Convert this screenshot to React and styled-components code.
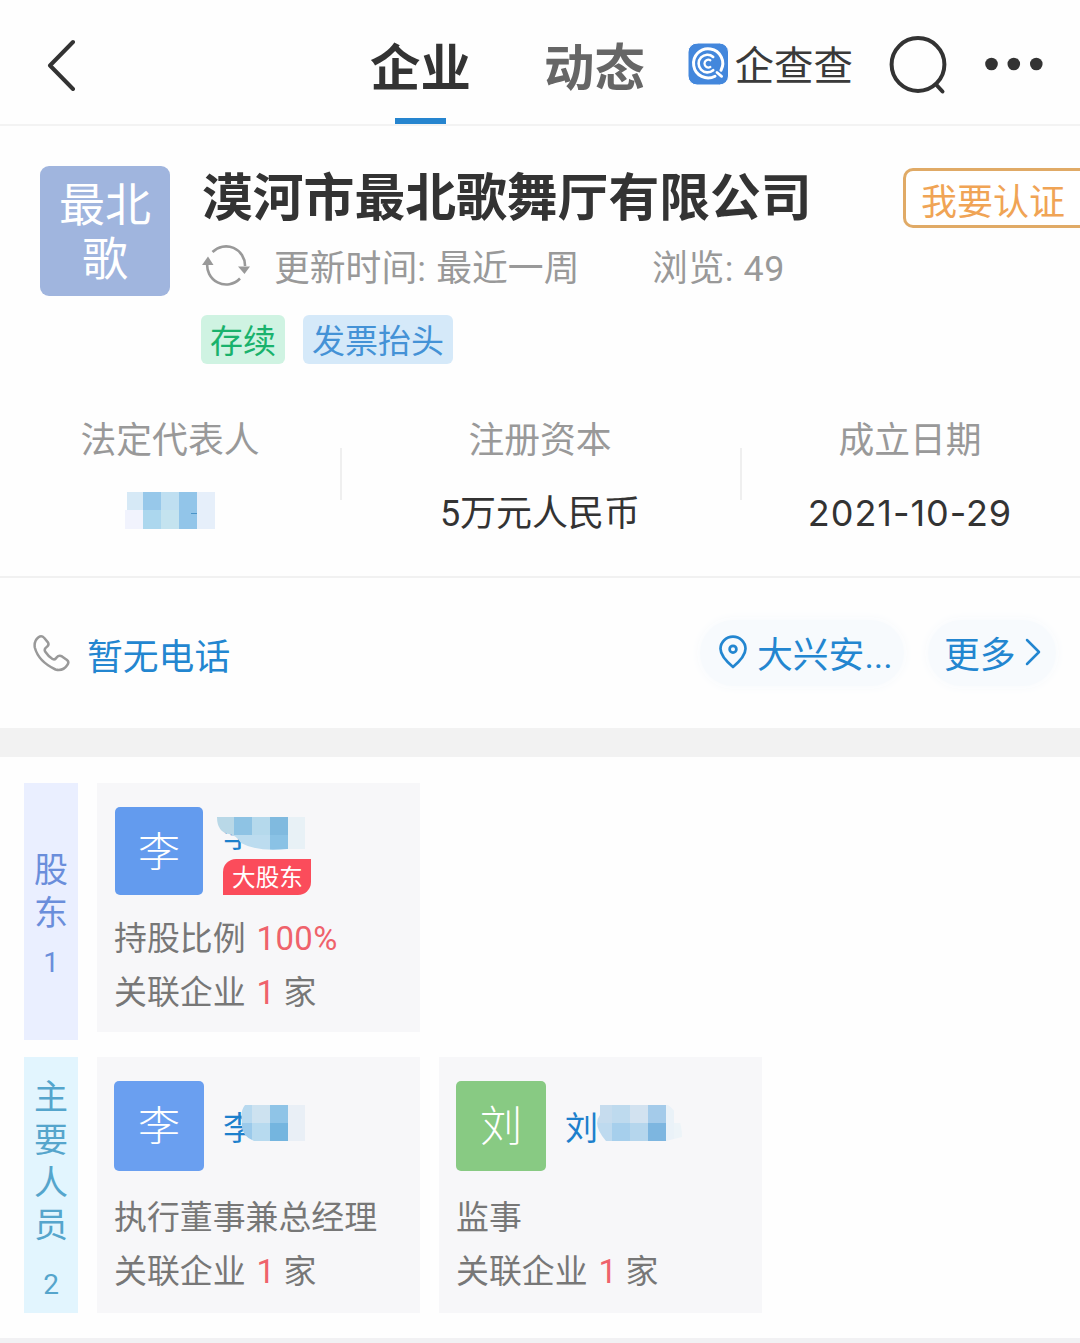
import styled, { createGlobalStyle } from 'styled-components';

const GlobalStyle = createGlobalStyle`
  * { box-sizing: border-box; margin: 0; padding: 0; }
  body {
    background: #fefefe;
    font-family: Roboto, 'Noto Sans CJK SC', sans-serif;
    overflow: hidden;
  }
  svg { display: block; flex-shrink: 0; }
`;

/* ================= Layout ================= */
const Page = styled.div`
  width: 1080px;
  height: 1343px;
  overflow: hidden;
  background: #fefefe;
`;

/* ================= Header ================= */
const Header = styled.header`
  display: flex;
  align-items: center;
  height: 126px;
  padding: 0 36px 0 46px;
  border-bottom: 2px solid #f3f3f3;
`;

const BackButton = styled.div`
  margin-top: 6px;
`;

const Tabs = styled.nav`
  display: flex;
  gap: 74px;
  height: 124px;
  margin-left: 292.5px;
`;

const Tab = styled.button`
  display: flex;
  flex-direction: column;
  align-items: center;
  justify-content: space-between;
  width: 100px;
  padding-top: 34px;
  border: 0;
  background: none;
  font-family: inherit;
  font-size: 50.4px;
  line-height: 70px;
  font-weight: 700;
  color: ${({ $active }) => ($active ? '#333' : '#666')};
  white-space: nowrap;
`;

const TabLine = styled.span`
  width: 51px;
  height: 6px;
  background: #2685cf;
`;

const Brand = styled.div`
  display: flex;
  align-items: center;
  gap: 6px;
  width: 166px;
  margin: 4px 0 0 43px;
`;

const BrandName = styled.span`
  padding-top: 6px;
  font-size: 39.5px;
  line-height: 48px;
  color: #3a3a3a;
  white-space: nowrap;
`;

const SearchButton = styled.div`
  margin-left: 35.5px;
  margin-top: 6px;
`;

const MoreButton = styled.div`
  margin-left: 37px;
  margin-top: 4px;
`;

/* ================= Company ================= */
const Company = styled.section`
  display: flex;
  height: 280px;
  padding: 40px 0 0 40px;
`;

const Logo = styled.div`
  flex-shrink: 0;
  width: 130px;
  height: 130px;
  padding: 12px 18px;
  border-radius: 9px;
  background: #a0b5de;
  color: #fff;
  font-size: 46px;
  line-height: 54px;
  text-align: center;
`;

const CompanyInfo = styled.div`
  margin-left: 32px;
  flex: 1;
`;

const TitleRow = styled.div`
  display: flex;
  justify-content: space-between;
  height: 64px;
`;

const CompanyName = styled.h1`
  padding-top: 1px;
  font-size: 50.8px;
  line-height: 64px;
  font-weight: 700;
  color: #333;
  white-space: nowrap;
`;

const VerifyButton = styled.button`
  width: 177px;
  height: 60px;
  margin-top: 2px;
  padding: 5px 0 0 15px;
  border: 3px solid #e0aa66;
  border-right: 0;
  border-radius: 10px 0 0 10px;
  background: #fff;
  font-family: inherit;
  font-size: 36px;
  line-height: 54px;
  text-align: left;
  color: #f0a455;
`;

const MetaRow = styled.div`
  display: flex;
  align-items: center;
  height: 50px;
  margin-top: 10px;
  font-size: 35.8px;
  color: #999;
  white-space: pre;
`;

const UpdateTime = styled.span`
  width: 378px;
  margin-left: 24px;
  word-spacing: 1.5px;
`;

const Views = styled.span`
  letter-spacing: 0.6px;
`;

const TagRow = styled.div`
  display: flex;
  gap: 18px;
  margin: 25px 0 0 -1px;
`;

const Tag = styled.span`
  height: 49px;
  padding: 0 9px;
  border-radius: 6px;
  font-size: 33px;
  line-height: 54px;
  background: ${({ $blue }) => ($blue ? '#d5e9f9' : '#cff3e2')};
  color: ${({ $blue }) => ($blue ? '#4492d6' : '#19b26c')};
`;

/* ================= Stats ================= */
const Stats = styled.section`
  display: grid;
  grid-template-columns: 340px 400px 340px;
  height: 172px;
  border-bottom: 2px solid #f1f1f1;
`;

const Stat = styled.div`
  display: flex;
  flex-direction: column;
  align-items: center;
  padding-top: 11px;
  background: ${({ $divided }) =>
    $divided ? 'linear-gradient(#efefef, #efefef) left 42px / 2px 52px no-repeat' : 'none'};
`;

const StatLabel = styled.span`
  font-size: 35.8px;
  line-height: 48px;
  color: #999;
`;

const StatValue = styled.span`
  margin-top: 25px;
  font-size: 36px;
  line-height: 48px;
  color: #333;
`;

const DateValue = styled(StatValue)`
  font-family: Inter, sans-serif;
  font-size: 36px;
  line-height: 46px;
  letter-spacing: 0.95px;
`;

const MaskedValue = styled.div`
  margin-top: 27px;
`;

/* ================= Contact ================= */
const Contact = styled.section`
  display: flex;
  align-items: center;
  height: 150px;
  padding: 0 24px 0 32px;
  color: #2386d0;
  font-size: 35.8px;
`;

const PhoneText = styled.span`
  margin: 2px auto 0 17px;
`;

const Pill = styled.div`
  display: flex;
  align-items: center;
  width: ${({ $width }) => $width}px;
  height: 66px;
  margin-left: 24px;
  padding: 0 0 2px ${({ $pad }) => $pad}px;
  border-radius: 33px;
  background: #f7fafd;
  box-shadow: 0 0 8px 3px #f9fbfd;
`;

const PillText = styled.span`
  margin: 0 9px 0 ${({ $left }) => $left || 0}px;
  white-space: nowrap;
`;

const Band = styled.div`
  height: 29px;
  background: #f2f2f2;
`;

/* ================= People ================= */
const Group = styled.section`
  display: flex;
  gap: 19px;
  height: ${({ $height }) => $height}px;
  margin: ${({ $top }) => $top}px 0 0 24px;
`;

const Rail = styled.div`
  display: flex;
  flex-direction: column;
  align-items: center;
  width: 54px;
  padding-top: ${({ $pad }) => $pad}px;
  background: ${({ $cyan }) => ($cyan ? '#e2f5fe' : '#eaefff')};
  color: ${({ $cyan }) => ($cyan ? '#55a5cc' : '#6a8edb')};
  font-size: 34px;
  line-height: 42.8px;
`;

const RailCount = styled.span`
  margin-top: ${({ $gap }) => $gap}px;
  font-size: 28px;
  line-height: 36px;
`;

const Card = styled.article`
  width: 323px;
  height: ${({ $height }) => $height}px;
  padding: 24px 0 0 17px;
  background: #f7f7f9;
`;

const CardHead = styled.div`
  display: flex;
  gap: ${({ $gap }) => $gap}px;
  height: 90px;
  margin-left: ${({ $left }) => $left || 0}px;
`;

const Avatar = styled.div`
  width: ${({ $size }) => $size}px;
  height: ${({ $size }) => $size}px;
  border-radius: 5px;
  background: ${({ $color }) => $color};
  color: #fff;
  font-size: 42px;
  font-weight: 300;
  line-height: 92px;
  text-align: center;
`;

const Person = styled.div`
  position: relative;
  padding-top: ${({ $top }) => $top}px;
`;

const PersonName = styled.div`
  height: 40px;
  font-size: 33px;
  line-height: 42px;
  color: #1d80cc;
`;

const Mask = styled.div`
  position: absolute;
  left: ${({ $left }) => $left}px;
  top: ${({ $top }) => $top}px;
`;

const HolderBadge = styled.div`
  width: 88px;
  height: 36px;
  margin-top: 4px;
  padding-left: 1px;
  border-radius: 13px 0;
  background: #fb4c5b;
  color: #fff;
  font-size: 23.6px;
  line-height: 38px;
  text-align: center;
`;

const CardLine = styled.p`
  margin-top: ${({ $top }) => $top || 0}px;
  font-size: 32.9px;
  line-height: 54px;
  color: #777;
  white-space: pre;
`;

const Red = styled.span`
  margin: 0 ${({ $gap }) => $gap || 0}px 0 11px;
  letter-spacing: 0.4px;
  color: #ef626b;
`;

const BottomLine = styled.div`
  height: 5px;
  margin-top: 25px;
  background: #f1f1f3;
`;

/* ================= Icons ================= */
const BackIcon = () => (
  <svg width="32" height="52" viewBox="0 0 32 52" fill="none" stroke="#333" strokeWidth="4" strokeLinecap="round" strokeLinejoin="round">
    <path d="M27 3 4 26.5 27 50" />
  </svg>
);

const BrandIcon = () => (
  <svg width="41" height="42" viewBox="0 0 41 42" fill="none" stroke="#fff" strokeLinecap="round">
    <rect width="40.5" height="42" rx="9" fill="#4387dc" />
    <path d="M27 33.2A14.6 14.6 0 1 1 33 27.2" strokeWidth="3" />
    <path d="M29 29.5 33.6 33.3" strokeWidth="2.8" />
    <path d="M25.2 27.2A8.8 8.8 0 1 1 25.2 13.9" strokeWidth="2.6" />
    <path d="M22.3 24A3.9 3.9 0 1 1 22.3 17.2" strokeWidth="2.3" />
  </svg>
);

const SearchIcon = () => (
  <svg width="58" height="60" viewBox="0 0 58 60" fill="none" stroke="#333" strokeWidth="4" strokeLinecap="round">
    <circle cx="29" cy="29.5" r="26.4" />
    <path d="m47.5 50 6 6.5" />
  </svg>
);

const DotsIcon = () => (
  <svg width="60" height="14" viewBox="0 0 60 14" fill="#333">
    <circle cx="7.5" cy="7" r="6.3" />
    <circle cx="29.8" cy="7" r="6.3" />
    <circle cx="52.3" cy="7" r="6.3" />
  </svg>
);

const RefreshIcon = () => (
  <svg width="48" height="42" viewBox="0 0 48 42" fill="none" stroke="#999" strokeWidth="2.6">
    <path d="M10.5 8A19 19 0 0 1 43 22" />
    <path d="M38 34.5A19 19 0 0 1 5.5 18" />
    <path d="M36 22.5h12L42.5 30z" fill="#999" stroke="none" />
    <path d="M0 21h11.5L6 12.5z" fill="#999" stroke="none" />
  </svg>
);

const PhoneIcon = () => (
  <svg width="38" height="38" viewBox="0 0 38 38" fill="none" stroke="#999" strokeWidth="2.5" strokeLinejoin="round">
    <path d="M6.5 3.3 Q9.5 1 12.3 4 L15.7 8.1 Q17.5 10.5 15.2 12.5 Q11.5 15.2 13.3 17.7 Q16.5 22.5 20.5 25 Q23 26.3 24.5 23.6 Q27 20.5 30 22.4 L35 26 Q37.5 28 35.3 31 Q31 37.5 23.5 35.5 Q6.5 27.5 2.8 13.5 Q1.8 7 6.5 3.3Z" />
  </svg>
);

const PinIcon = () => (
  <svg width="28" height="34" viewBox="0 0 28 34" fill="none" stroke="#2386d0" strokeWidth="2.7" strokeLinejoin="round">
    <path d="M14 32Q1.5 21.5 1.5 13.8a12.5 12.2 0 0 1 25 0Q26.5 21.5 14 32Z" />
    <circle cx="14" cy="14.2" r="3.4" />
  </svg>
);

const ArrowIcon = () => (
  <svg width="16" height="28" viewBox="0 0 16 28" fill="none" stroke="#2386d0" strokeWidth="2.5" strokeLinecap="round" strokeLinejoin="round">
    <path d="M2 2 14 14 2 26" />
  </svg>
);

/* Mosaicos que cobrem os nomes: cada célula é [x, y, w, h, cor] */
const Mosaic = ({ width, height, cells, clip, id }) => (
  <svg width={width} height={height} viewBox={`0 0 ${width} ${height}`}>
    {clip && <clipPath id={id}><path d={clip} /></clipPath>}
    <g clipPath={clip ? `url(#${id})` : undefined}>
      {cells.map(([x, y, w, h, fill]) => (
        <rect key={`${x}-${y}`} x={x} y={y} width={w} height={h} fill={fill} />
      ))}
    </g>
  </svg>
);

const legalCells = [
  [2, 0, 17, 18, '#d6e9f6'], [0, 18, 18, 19, '#f1f3fd'],
  [18, 0, 18, 18, '#97c8ea'], [18, 18, 18, 19, '#acd7ee'],
  [36, 0, 18, 18, '#bfdff1'], [36, 18, 18, 19, '#c4e3ef'],
  [54, 0, 18, 37, '#92c5e9'], [66, 21, 6, 1, '#4a94c8'],
  [72, 0, 18, 37, '#e6effa'],
];

const holderCells = [
  [0, 0, 17, 18, '#b9d8e7'], [17, 0, 18, 18, '#8ec3e4'],
  [35, 0, 18, 18, '#b5d9ec'], [53, 0, 18, 18, '#80badf'],
  [71, 0, 17, 32, '#e8f1f6'],
  [17, 18, 36, 15, '#bcdcef'], [53, 18, 18, 15, '#8ac2e5'],
];

const managerCells = [
  [0, 0, 12, 18, '#b8d9ef'], [12, 0, 18, 18, '#cde2f0'], [30, 0, 18, 18, '#8fc4e7'],
  [0, 18, 12, 18, '#9bcaeb'], [12, 18, 18, 18, '#b7daef'], [30, 18, 18, 18, '#74b5df'],
  [48, 0, 17, 36, '#e9eff6'],
];

const supervisorCells = [
  [0, 0, 16, 18, '#c6dcee'], [16, 0, 18, 18, '#bedaee'], [34, 0, 18, 18, '#d2e2f0'], [52, 0, 18, 18, '#a4cbea'],
  [0, 18, 16, 18, '#bedaef'], [16, 18, 18, 18, '#a6cfec'], [34, 18, 18, 18, '#b5d6ed'], [52, 18, 18, 18, '#7db6e0'],
  [70, 0, 8, 36, '#eaf2f8'], [78, 18, 8, 18, '#edf4f8'],
];

/* ================= Page ================= */
const RelatedLine = () => (
  <CardLine>关联企业<Red $gap={8}>1</Red>家</CardLine>
);

export default function App() {
  return (
    <Page>
      <GlobalStyle />
      <Header>
        <BackButton><BackIcon /></BackButton>
        <Tabs>
          <Tab $active>企业<TabLine /></Tab>
          <Tab>动态</Tab>
        </Tabs>
        <Brand>
          <BrandIcon />
          <BrandName>企查查</BrandName>
        </Brand>
        <SearchButton><SearchIcon /></SearchButton>
        <MoreButton><DotsIcon /></MoreButton>
      </Header>

      <Company>
        <Logo>最北歌</Logo>
        <CompanyInfo>
          <TitleRow>
            <CompanyName>漠河市最北歌舞厅有限公司</CompanyName>
            <VerifyButton>我要认证</VerifyButton>
          </TitleRow>
          <MetaRow>
            <RefreshIcon />
            <UpdateTime>更新时间: 最近一周</UpdateTime>
            <Views>浏览: 49</Views>
          </MetaRow>
          <TagRow>
            <Tag>存续</Tag>
            <Tag $blue>发票抬头</Tag>
          </TagRow>
        </CompanyInfo>
      </Company>

      <Stats>
        <Stat>
          <StatLabel>法定代表人</StatLabel>
          <MaskedValue><Mosaic width={90} height={37} cells={legalCells} /></MaskedValue>
        </Stat>
        <Stat $divided>
          <StatLabel>注册资本</StatLabel>
          <StatValue>5万元人民币</StatValue>
        </Stat>
        <Stat $divided>
          <StatLabel>成立日期</StatLabel>
          <DateValue>2021-10-29</DateValue>
        </Stat>
      </Stats>

      <Contact>
        <PhoneIcon />
        <PhoneText>暂无电话</PhoneText>
        <Pill $width={204} $pad={19}>
          <PinIcon />
          <PillText $left={10}>大兴安...</PillText>
        </Pill>
        <Pill $width={128} $pad={16}>
          <PillText>更多</PillText>
          <ArrowIcon />
        </Pill>
      </Contact>
      <Band />

      <Group $top={26} $height={257}>
        <Rail $pad={66}>
          <span>股</span>
          <span>东</span>
          <RailCount $gap={10}>1</RailCount>
        </Rail>
        <Card $height={249}>
          <CardHead $gap={20} $left={1}>
            <Avatar $size={88} $color="#639bee">李</Avatar>
            <Person $top={8}>
              <PersonName>李</PersonName>
              <HolderBadge>大股东</HolderBadge>
              <Mask $left={-6} $top={10}>
                <Mosaic id="holder" width={88} height={33} cells={holderCells} clip="M0 0H88V32H70Q40 35 24 26Q19 18 12 17Q0 15 0 0Z" />
              </Mask>
            </Person>
          </CardHead>
          <CardLine $top={15}>持股比例<Red>100%</Red></CardLine>
          <RelatedLine />
        </Card>
      </Group>

      <Group $top={17} $height={256}>
        <Rail $cyan $pad={19}>
          <span>主</span>
          <span>要</span>
          <span>人</span>
          <span>员</span>
          <RailCount $gap={20}>2</RailCount>
        </Rail>
        <Card $height={256}>
          <CardHead $gap={19}>
            <Avatar $size={90} $color="#6a9ff0">李</Avatar>
            <Person $top={27}>
              <PersonName>李</PersonName>
              <Mask $left={17} $top={24}>
                <Mosaic id="manager" width={65} height={36} cells={managerCells} clip="M5 0H65V36H14Q0 30 2 17Q0 6 5 0Z" />
              </Mask>
            </Person>
          </CardHead>
          <CardLine $top={20}>执行董事兼总经理</CardLine>
          <RelatedLine />
        </Card>
        <Card $height={256}>
          <CardHead $gap={19}>
            <Avatar $size={90} $color="#88ca83">刘</Avatar>
            <Person $top={27}>
              <PersonName>刘</PersonName>
              <Mask $left={31} $top={24}>
                <Mosaic id="supervisor" width={86} height={36} cells={supervisorCells} clip="M4 0H72Q86 10 86 32L70 36H10Q-4 20 4 10Z" />
              </Mask>
            </Person>
          </CardHead>
          <CardLine $top={20}>监事</CardLine>
          <RelatedLine />
        </Card>
      </Group>
      <BottomLine />
    </Page>
  );
}
